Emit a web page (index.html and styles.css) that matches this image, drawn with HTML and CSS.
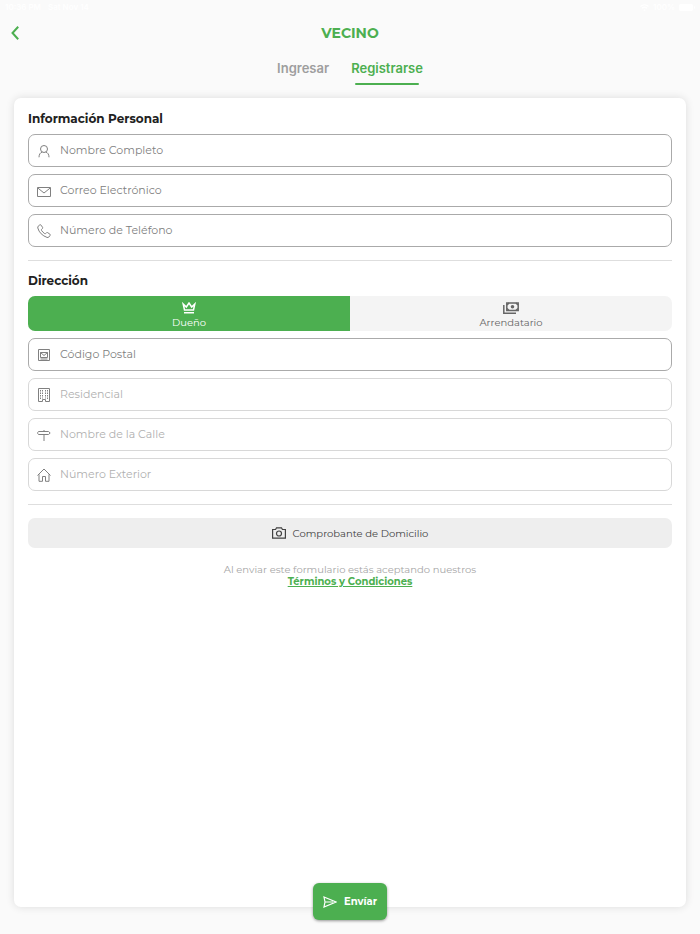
FILE: index.html
```html
<!DOCTYPE html>
<html lang="es">
  <head>
    <meta charset="UTF-8" />
    <meta name="viewport" content="width=device-width, initial-scale=1.0" />
    <title>Vecino - Registrarse</title>
    <link rel="stylesheet" href="styles.css">
  </head>
  <body>
    <div class="status-bar">
      <span>10:36 PM</span>
      <span>Sat Nov 14</span>
      <span class="status-right">
        <svg width="9" height="7" viewBox="0 0 18 14" fill="none" stroke="currentColor" stroke-width="2.5"><path d="M1 5a12 12 0 0 1 16 0M4 8.500a8 8 0 0 1 10 0M7.500 12h3" /></svg>
        100%
        <svg width="16" height="7" viewBox="0 0 16 7" fill="currentColor"><rect width="14" height="7" rx="2" /><path d="M15 2v3l1-1V3z" /></svg>
      </span>
    </div>

    <header class="header">
      <button class="back-button" type="button" aria-label="Regresar">
        <svg width="8" height="14" viewBox="0 0 8 14" fill="none" stroke="currentColor" stroke-width="2"><path d="M7.200.800 1.500 7l5.700 6.200" /></svg>
      </button>
      <h1>VECINO</h1>
    </header>

    <nav class="tabs">
      <a href="#ingresar" class="tab">Ingresar</a>
      <a href="#registrarse" class="tab active">Registrarse</a>
    </nav>

    <form id="register" class="card">
      <h2>Información Personal</h2>
      <div class="fields">
        <label class="field">
          <svg class="icon" viewBox="0 0 14 14"><circle cx="7" cy="5" r="3.500" /><path d="M2 13.300c0-3 1.300-4.700 3.300-5.300M12 13.300c0-3-1.300-4.700-3.300-5.300" /></svg>
          <input type="text" aria-label="Nombre Completo" placeholder="Nombre Completo">
        </label>
        <label class="field">
          <svg class="icon" viewBox="0 0 14 14"><path d="M.5 3.500h13v9H.5zM.8 4 7 9l6.200-5" /></svg>
          <input type="email" aria-label="Correo Electrónico" placeholder="Correo Electrónico">
        </label>
        <label class="field">
          <svg class="icon" viewBox="0 0 14 14"><path d="M1.200 2.200 2.800.900q.7-.5 1.200.2l1.600 2.300q.4.700-.2 1.200l-.9.800q-.3.500 0 1 1.300 2 3.200 3.200.6.300 1-.1l.8-.8q.5-.5 1.100-.1l2.300 1.600q.7.500.2 1.200l-1.200 1.600q-.7.800-1.900.4C5.500 11.800 2 8.500.8 4q-.2-1.100.4-1.800z" /></svg>
          <input type="tel" aria-label="Número de Teléfono" placeholder="Número de Teléfono">
        </label>
      </div>

      <hr>

      <h2>Dirección</h2>
      <div class="segment">
        <label class="option">
          <input type="radio" name="tipo" value="dueno" checked>
          <svg width="14" height="12" viewBox="0 0 14 12" fill="none" stroke="currentColor" stroke-width="1.500"><path d="M1.200 2 2.500 8h9l1.300-6L9.700 5 7 1 4.300 5zM2 10.800h10" /></svg>
          <span>Dueño</span>
        </label>
        <label class="option">
          <input type="radio" name="tipo" value="arrendatario">
          <svg width="16" height="12" viewBox="0 0 16 12" fill="none" stroke="currentColor" stroke-width="1.500"><path d="M3.800 1h11.400v7.500H3.800zM.8 3v8.200H13" /><circle cx="9.500" cy="4.750" r="1.800" fill="currentColor" stroke="none" /><path d="M4 3 6 1M13 1l2 2M4 6.500l2 2M13 8.500l2-2" /></svg>
          <span>Arrendatario</span>
        </label>
      </div>
      <div class="fields">
        <label class="field">
          <svg class="icon" viewBox="0 0 14 14"><path d="M1.500 1.500h11v11h-11zM3.500 4.500h7v5h-7zM3.500 4.500 7 7.500l3.500-3M3.500 11h7" /></svg>
          <input type="text" aria-label="Código Postal" placeholder="Código Postal">
        </label>
        <label class="field disabled">
          <svg class="icon" viewBox="0 0 14 14"><path d="M1.500.5h11v13h-4V11.500h-3v2h-4z" /><path d="M3.500 2v9M5.500 2v8.500M8.500 2v8.500M10.500 2v9" stroke-dasharray="1.500 1" /></svg>
          <input type="text" aria-label="Residencial" placeholder="Residencial" disabled>
        </label>
        <label class="field disabled">
          <svg class="icon" viewBox="0 0 14 14"><path d="M1.500 3.500h10l1.700 1.500-1.700 1.500h-10l-.7-.7V4.200zM7 2v1.500M7 6.500V13" /></svg>
          <input type="text" aria-label="Nombre de la Calle" placeholder="Nombre de la Calle" disabled>
        </label>
        <label class="field disabled">
          <svg class="icon" viewBox="0 0 14 14"><path d="M.5 7.500 7 1l6.500 6.500M2 6.300v7h3.500V8.500h3v4.800H12v-7" /></svg>
          <input type="text" aria-label="Número Exterior" placeholder="Número Exterior" disabled>
        </label>
      </div>

      <hr>

      <button class="upload-button" type="button">
        <svg width="14" height="12" viewBox="0 0 14 12" fill="none" stroke="currentColor" stroke-width="1.200"><path d="M.6 2.500h3L4.500.8h5l.9 1.700h3v8.700H.6z" /><circle cx="7" cy="6.500" r="2.500" /></svg>
        Comprobante de Domicilio
      </button>

      <p class="terms">
        Al enviar este formulario estás aceptando nuestros
        <a href="#terminos">Términos y Condiciones</a>
      </p>
    </form>

    <button class="submit-button" type="submit" form="register">
      <svg width="14" height="12" viewBox="0 0 14 12" fill="none" stroke="currentColor" stroke-width="1.200"><path d="M1 1l12 5-12 5 1-5zM2 6h8" /></svg>
      Envíar
    </button>
  </body>
</html>
```
FILE: styles.css
```css
* { box-sizing: border-box; }
body { margin: 0; min-height: 100vh; display: flex; flex-direction: column; background-color: #fafafa; color: #212121; font-family: Montserrat, Inter, sans-serif; font-size: 12px; }
button, input { font-family: inherit; }
svg { flex: none; }

/* Status bar */
.status-bar { display: flex; gap: 7px; height: 14px; padding: 0 5px; align-items: center; color: white; font-family: Inter, sans-serif; font-size: 8px; font-weight: 600; }
.status-right { display: flex; gap: 4px; align-items: center; margin-left: auto; }

/* Header */
.header { display: grid; grid-template-columns: 40px 1fr 40px; align-items: center; height: 38px; color: #4caf50; }
.header h1 { margin: 0; text-align: center; font-size: 14px; font-weight: 700; }
.back-button { display: flex; padding: 4px 11px; border: none; background: none; color: inherit; cursor: pointer; }

.tabs { display: flex; justify-content: center; gap: 22px; height: 46px; padding-top: 8px; }
.tab { position: relative; height: 25px; color: #9e9e9e; font-family: Inter, sans-serif; font-size: 13px; line-height: 16px; font-weight: 600; text-decoration: none; }
.tab.active { color: #4caf50; }
.tab.active::after { content: ""; position: absolute; left: 4px; right: 4px; bottom: 0; height: 2px; border-radius: 1px; background-color: #4caf50; }

/* Card */
.card { flex: 1; margin: 0 14px; padding: 14px; background-color: white; border-radius: 7px; box-shadow: 0 0 8px rgba(0, 0, 0, 0.12); }
.card h2 { margin: 0 0 8px; font-size: 12px; line-height: 14px; font-weight: 700; }
.card hr { margin: 13px 0; border: none; border-top: 1px solid #dedede; }

.fields { display: flex; flex-direction: column; gap: 7px; }
.field { display: flex; align-items: center; gap: 9px; height: 33px; padding: 0 8px; border: 1px solid #aaa; border-radius: 7px; color: #808080; }
.field input { flex: 1; min-width: 0; padding: 0 0 2px; border: none; outline: none; background: none; color: #212121; font-size: 11px; }
.field input::placeholder { color: #808080; }
.field.disabled { border-color: #d8d8d8; }
.field.disabled input::placeholder { color: #b0b0b0; }
.icon { width: 14px; height: 14px; fill: none; stroke: currentColor; stroke-width: 1; }

/* Owner / tenant switch */
.segment { display: flex; height: 35px; margin-bottom: 7px; border-radius: 7px; overflow: hidden; background-color: #f4f4f4; }
.option { flex: 1; display: flex; flex-direction: column; align-items: center; justify-content: center; gap: 2px; padding-top: 4px; color: #666; font-size: 10px; line-height: 13px; cursor: pointer; }
.option input { position: absolute; opacity: 0; }
.option:has(input:checked) { background-color: #4caf50; color: white; }

.upload-button { display: flex; align-items: center; justify-content: center; gap: 7px; width: 100%; height: 30px; padding: 0; border: none; border-radius: 7px; background-color: #eee; color: #424242; font-size: 10px; cursor: pointer; }

.terms { margin: 16px 0 0; text-align: center; color: #a6a6a6; font-size: 10px; line-height: 12px; }
.terms a { display: block; width: fit-content; margin: 0 auto; color: #4caf50; font-weight: 700; }

.submit-button { display: flex; align-items: center; justify-content: center; gap: 7px; z-index: 1; align-self: center; width: 74px; height: 37px; margin: -24px 0 14px; padding: 0; border: none; border-radius: 6px; background-color: #4caf50; color: white; font-size: 10px; font-weight: 700; box-shadow: 0 1px 3px rgba(0, 0, 0, 0.4); cursor: pointer; }
```
